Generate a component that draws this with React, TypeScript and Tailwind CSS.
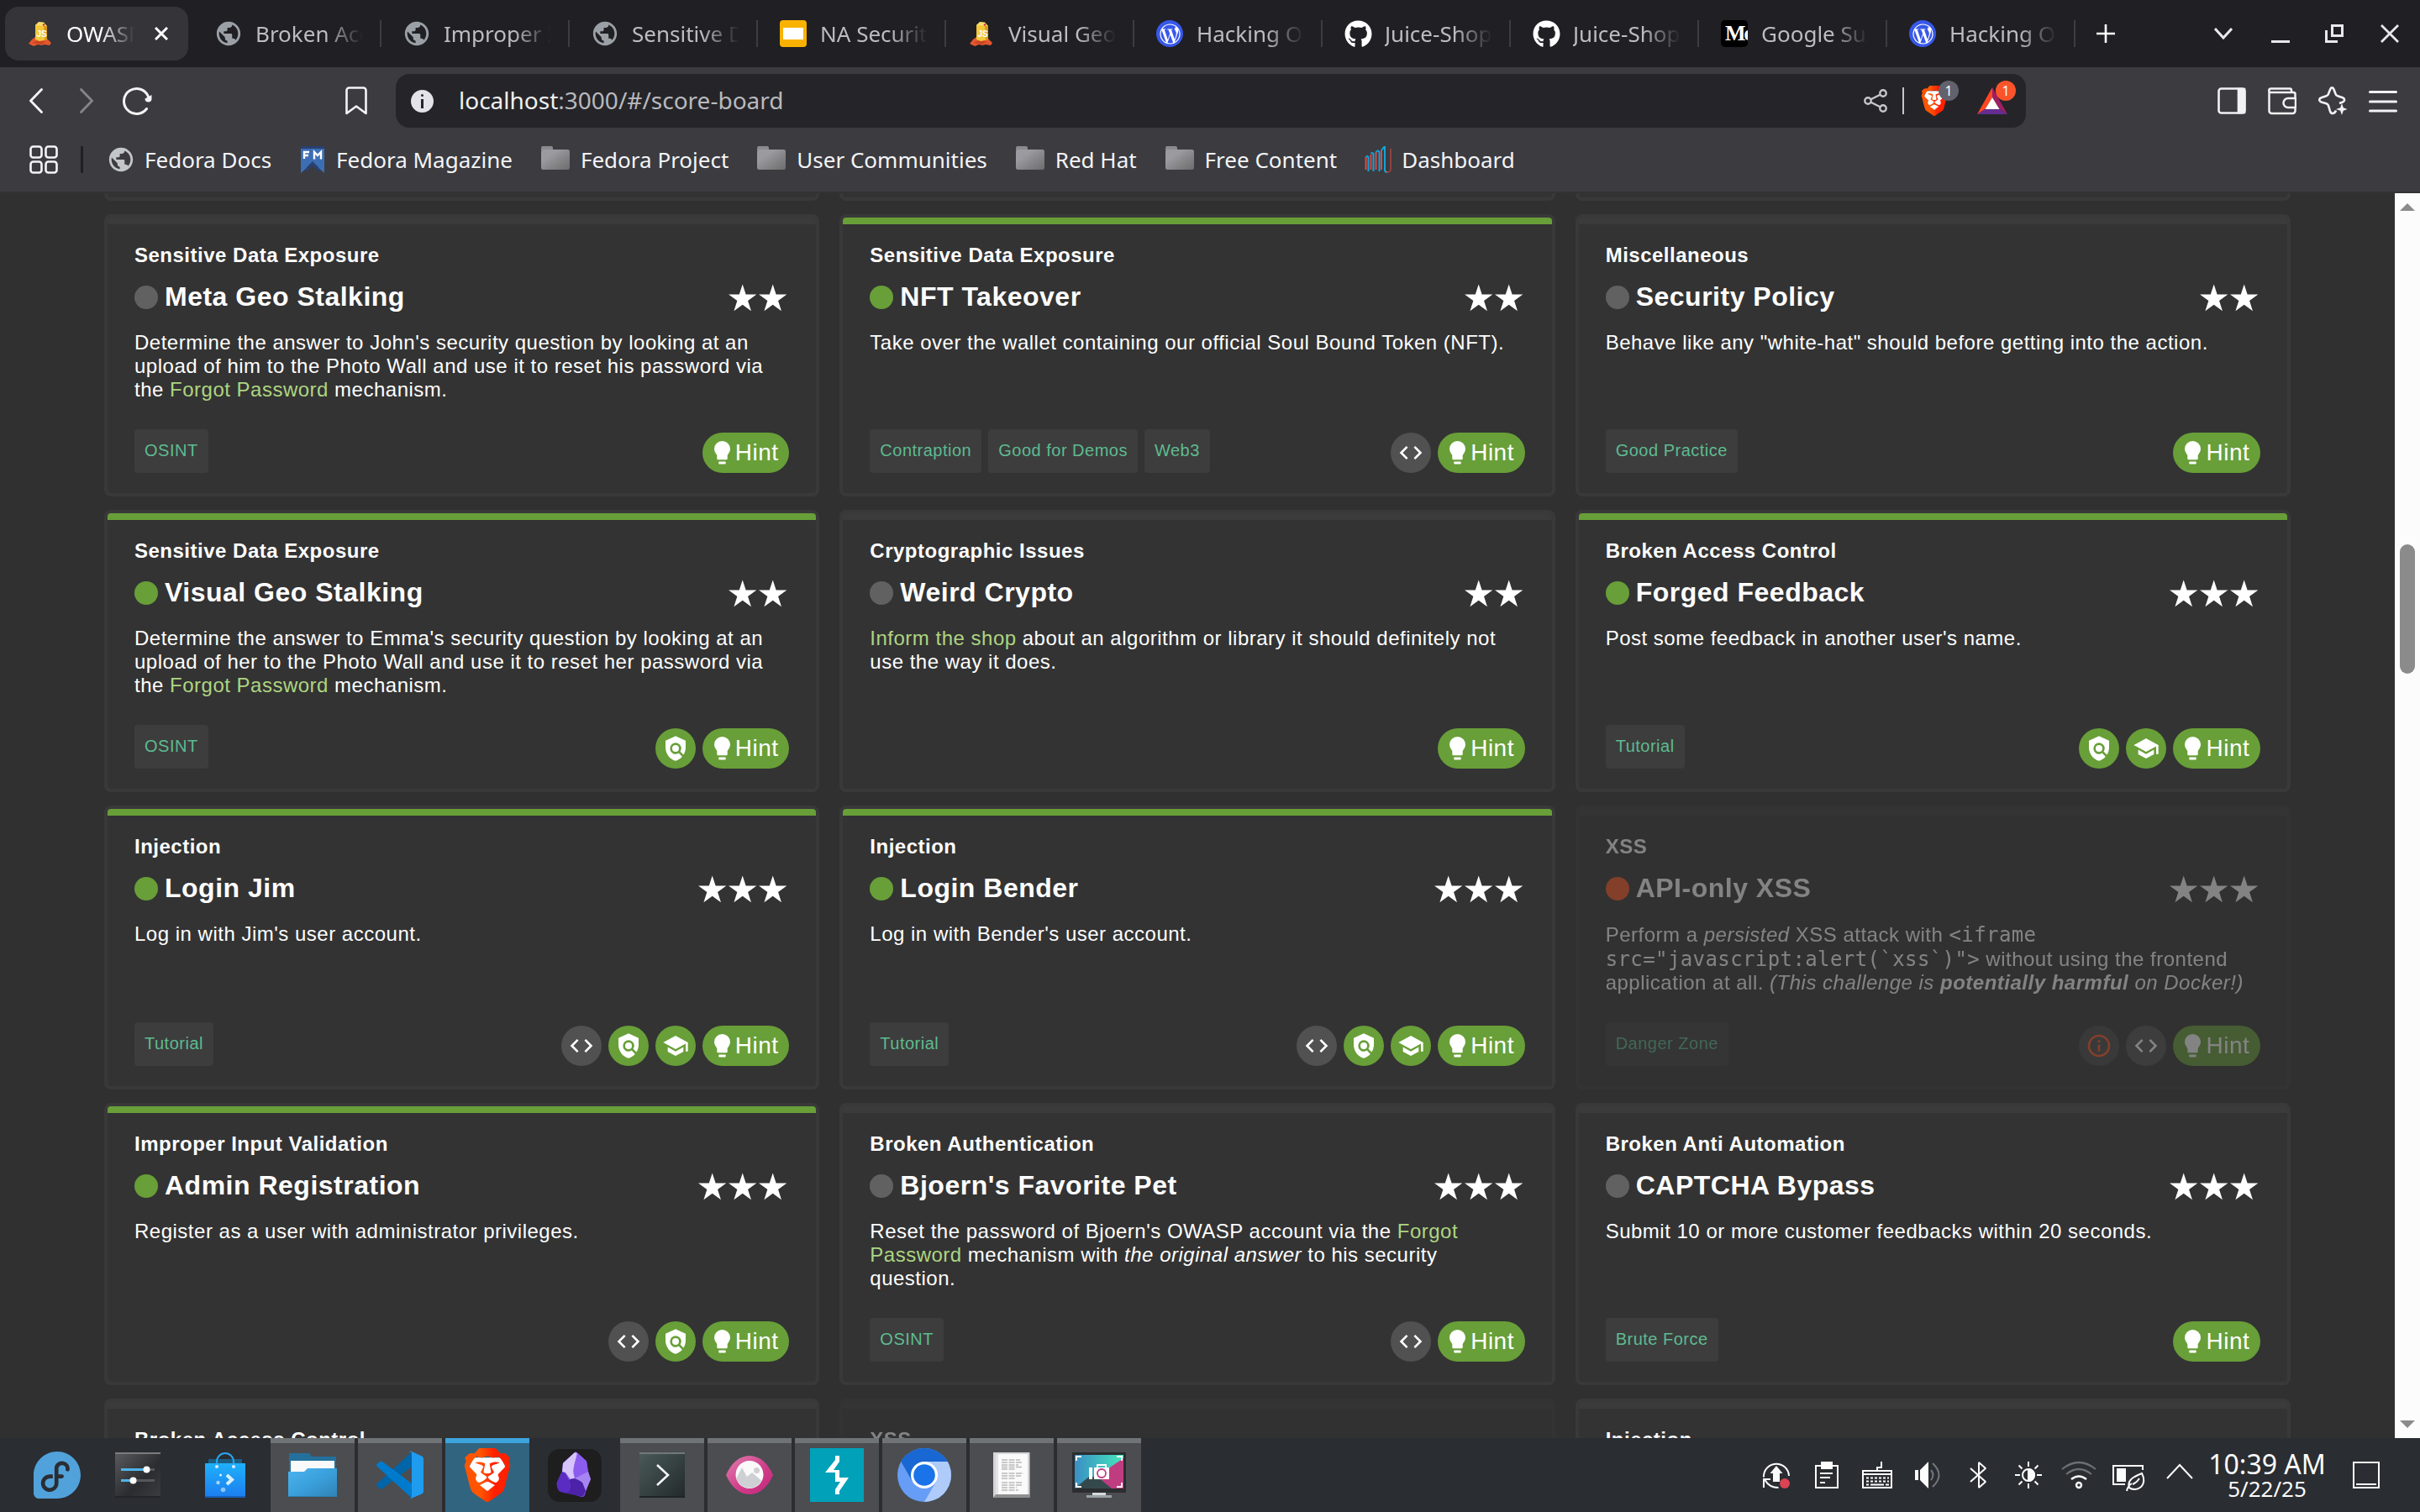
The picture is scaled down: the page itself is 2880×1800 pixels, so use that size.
import type { ReactNode } from 'react';
import { MdCode, MdInfoOutline, MdPolicy, MdPublic, MdSchool } from 'react-icons/md';
import { FaGithub, FaWordpressSimple } from 'react-icons/fa';
import { SiBrave, SiFedora } from 'react-icons/si';

/* ---------- favicons ---------- */

function JuiceIcon() {
  return (
    <svg viewBox="0 0 32 32" className="h-8 w-8">
      <path d="M2 28l4-5 4-3 14 2 3 3 2 2-2 3-6-1-4 1-4-1-5 2z" fill="#e4572e" />
      <path d="M6 27l8-3 8 2-5 3-5-1z" fill="#b83a1c" opacity=".6" />
      <path d="M10 6l4-3 7 1 3 3v16l-9 2-5-2z" fill="#f3c93b" />
      <path d="M20 6l4 1v16l-3 1z" fill="#d99a1b" />
      <path d="M14 2l6 .5 3.500 4.500L10 6z" fill="#f8dd6d" />
      <circle cx="20" cy="5.500" r="1.300" fill="#c33" />
      <text x="11.500" y="20" fontSize="10" fontWeight="700" fill="#fff" fontFamily="Liberation Sans, sans-serif">JS</text>
    </svg>
  );
}

function WordpressIcon() {
  return (
    <div className="grid h-8 w-8 place-items-center rounded-full bg-[#3858e9]">
      <FaWordpressSimple size={25} color="#fff" />
    </div>
  );
}

function MediumIcon() {
  return (
    <div className="h-8 w-8 overflow-hidden rounded-[5px] bg-black pl-[5px] font-['Liberation_Serif',serif] text-[26px] leading-8 font-bold tracking-[-2px] text-white">
      Me
    </div>
  );
}

function SlidesIcon() {
  return (
    <div className="grid h-8 w-8 place-items-center rounded-[4px] bg-[#f9b200]">
      <div className="h-3.5 w-6 bg-white" />
    </div>
  );
}

const Globe = ({ className }: { className: string }) => (
  <div className={`flex h-8 w-8 items-center justify-center ${className}`}>
    <MdPublic size={34} className="shrink-0" />
  </div>
);

/* ---------- tab strip ---------- */

const tabs: { title: string; icon: ReactNode }[] = [
  { title: 'Broken Access', icon: <Globe className="text-[#9aa0a6]" /> },
  { title: 'Improper Input', icon: <Globe className="text-[#9aa0a6]" /> },
  { title: 'Sensitive Data', icon: <Globe className="text-[#9aa0a6]" /> },
  { title: 'NA Security', icon: <SlidesIcon /> },
  { title: 'Visual Geo', icon: <JuiceIcon /> },
  { title: 'Hacking OWASP', icon: <WordpressIcon /> },
  { title: 'Juice-Shop', icon: <FaGithub size={33} color="#fff" /> },
  { title: 'Juice-Shop', icon: <FaGithub size={33} color="#fff" /> },
  { title: 'Google Summer', icon: <MediumIcon /> },
  { title: 'Hacking OWASP', icon: <WordpressIcon /> },
];

function TabStrip() {
  return (
    <div className="flex h-20 items-center bg-[#1f1f24] pl-1.5">
      <div className="flex h-16 w-[218px] items-center rounded-2xl bg-[#343439] pl-[26px]">
        <JuiceIcon />
        <div className="ml-[15px] w-[81px] overflow-hidden text-[26px] whitespace-nowrap text-white [mask-image:linear-gradient(to_right,#000_50%,transparent)]">
          OWASP
        </div>
        <svg viewBox="0 0 16 16" className="ml-6 h-4 w-4" stroke="#fff" strokeWidth="3">
          <path d="M1 1l14 14M15 1L1 15" />
        </svg>
      </div>
      <div className="ml-1.5 flex">
        {tabs.map((t, i) => (
          <div key={i} className="flex h-16 w-56 items-center pl-[26px]">
            <div className="w-8 shrink-0">{t.icon}</div>
            <div className="ml-4 w-32 overflow-hidden text-[26px] whitespace-nowrap text-[#bdbdc1] [mask-image:linear-gradient(to_right,#000_65%,transparent)]">
              {t.title}
            </div>
            <div className="ml-5 h-8 w-0.5 bg-[#3c3c42]" />
          </div>
        ))}
      </div>
      <svg viewBox="0 0 22 22" className="ml-[25px] h-[22px] w-[22px]" stroke="#fff" strokeWidth="2.6">
        <path d="M11 0v22M0 11h22" />
      </svg>
      <svg viewBox="0 0 22 14" className="ml-[118px] h-3.5 w-[22px]" fill="none" stroke="#e9e9ec" strokeWidth="3">
        <path d="M1 1l10 11L21 1" />
      </svg>
      <svg viewBox="0 0 22 22" className="ml-[46px] h-[22px] w-[22px]">
        <path d="M0 19h22v3H0z" fill="#e9e9ec" />
      </svg>
      <svg viewBox="0 0 22 22" className="ml-[42px] h-[22px] w-[22px]" fill="none" stroke="#e9e9ec" strokeWidth="3">
        <path d="M8.500 1.500h12v12h-12zM1.500 7v13.500H15" />
      </svg>
      <svg viewBox="0 0 22 22" className="ml-11 h-[22px] w-[22px]" stroke="#e9e9ec" strokeWidth="2.8">
        <path d="M1 1l20 20M21 1L1 21" />
      </svg>
    </div>
  );
}

/* ---------- address bar ---------- */

function BraveLion({ size, gradient }: { size: number; gradient: string }) {
  return (
    <svg viewBox="0 0 24 24" width={size} height={size} className="block">
      <defs>
        <linearGradient id={gradient} x1="0" x2="1">
          <stop offset=".35" stopColor="#ff5500" />
          <stop offset=".65" stopColor="#ff2000" />
        </linearGradient>
      </defs>
      <path d="M6 4.200h12l2 4-2.500 8L12 21l-5.500-4.800L4 8.200z" fill="#fff" />
      <SiBrave size={24} fill={`url(#${gradient})`} />
    </svg>
  );
}

function AddressRow() {
  return (
    <div className="flex h-20 items-center pl-[35px]">
      <svg viewBox="0 0 16 30" className="h-[30px] w-4" fill="none" stroke="#f4f4f6" strokeWidth="2.8" strokeLinecap="round">
        <path d="M14.500 1.500L1.500 15l13 13.500" />
      </svg>
      <svg viewBox="0 0 16 30" className="ml-[44px] h-[30px] w-4" fill="none" stroke="#85858a" strokeWidth="2.8" strokeLinecap="round">
        <path d="M1.500 1.500L14.500 15l-13 13.500" />
      </svg>
      <svg viewBox="0 0 36 34" className="ml-[35px] h-[34px] w-9" fill="none" stroke="#f4f4f6" strokeWidth="3" strokeLinecap="round">
        <path d="M28.500 26.500A15 15 0 1 1 30.500 12" />
        <path d="M26.500 14.500l8-4.500v4.500a4 4 0 0 1-4 4a4 4 0 0 1-4-4z" fill="#f4f4f6" stroke="none" />
      </svg>
      <svg viewBox="0 0 26 34" className="ml-[229px] h-[34px] w-[26px]" fill="none" stroke="#f4f4f6" strokeWidth="2.6" strokeLinejoin="round">
        <path d="M4.500 1.500h17a3 3 0 0 1 3 3V32L13 23.500 1.500 32V4.500a3 3 0 0 1 3-3z" />
      </svg>
      <div className="ml-[34px] flex h-16 w-[1940px] items-center rounded-2xl bg-[#252529] pr-[22px] pl-[18px]">
        <div className="flex h-[27px] w-[27px] flex-col items-center justify-center gap-[3px] rounded-full bg-[#e4e3e9]">
          <div className="h-[3px] w-[3px] rounded-full bg-[#252529]" />
          <div className="h-[11px] w-[3px] bg-[#252529]" />
        </div>
        <div className="ml-[30px] pb-0.5 text-[28px] text-[#b9b9bf]">
          <span className="text-[#f0f0f2]">localhost</span>:3000/#/score-board
        </div>
        <svg viewBox="0 0 28 28" className="ml-auto h-7 w-7" fill="none" stroke="#c6c6cc" strokeWidth="2.400">
          <circle cx="5" cy="14" r="3.700" />
          <circle cx="23" cy="5" r="3.700" />
          <circle cx="23" cy="23" r="3.700" />
          <path d="M8.500 12.300l11-5.600M8.500 15.700l11 5.600" />
        </svg>
        <div className="ml-[18px] h-8 w-0.5 bg-[#c6c6cc]" />
        <div className="relative ml-[18px] h-9 w-9">
          <BraveLion size={36} gradient="lion-small" />
          <div className="absolute -top-1.5 left-[23px] grid h-6 w-6 place-items-center rounded-full bg-[#62626e] text-[16px] leading-none text-white">1</div>
        </div>
        <div className="relative ml-[33px] h-9 w-9">
          <svg viewBox="0 0 36 36" className="h-9 w-9">
            <path d="M18 2L0 34l9.500-6L18 14z" fill="#ff4724" />
            <path d="M18 2l18 32-9.500-6L18 14z" fill="#9e1f63" />
            <path d="M0 34h36l-9.500-6h-17z" fill="#662d91" />
            <path d="M18 14l8.500 14h-17z" fill="#fff" />
          </svg>
          <div className="absolute -top-1.5 left-[22px] grid h-6 w-6 place-items-center rounded-full bg-[#fb542b] text-[16px] leading-none text-white">1</div>
        </div>
      </div>
      <div className="ml-[228px] flex gap-[26px] text-[#f2f2f4]">
        <svg viewBox="0 0 34 34" className="h-[34px] w-[34px]" fill="none" stroke="currentColor" strokeWidth="2.600">
          <rect x="1.500" y="2.500" width="31" height="29" rx="3" />
          <path d="M25 3h7v28h-7z" fill="currentColor" />
        </svg>
        <svg viewBox="0 0 34 34" className="h-[34px] w-[34px]" fill="none" stroke="currentColor" strokeWidth="2.500" strokeLinejoin="round">
          <path d="M32.500 14V9a2 2 0 0 0-2-2H3.500a2 2 0 0 1 0-4.500H26a2 2 0 0 1 2 2V7M1.500 4.500V29a3 3 0 0 0 3 3h25a3 3 0 0 0 3-3v-4" />
          <path d="M33 14h-9a5.500 5.500 0 0 0 0 11h9z" />
        </svg>
        <svg viewBox="0 0 34 34" className="h-[34px] w-[34px]" fill="none" stroke="currentColor" strokeWidth="2.600" strokeLinejoin="round">
          <path d="M21 28.500c-1.500 4-5.500 5-7 1l-2-6.800a4 4 0 0 0-2.500-2.500L3.500 18.500c-3-1.200-3-4 0-5.200l6-2a4 4 0 0 0 2.500-2.500L14.300 3c1-2.200 3-2.200 4 0l2.200 5.800a4 4 0 0 0 2.500 2.500l6 2c2.800 1.200 2.800 4 0 5.200l-4 1.500" />
          <path d="M28 20l1.800 5.200L35 27l-5.200 1.800L28 34l-1.800-5.200L21 27l5.200-1.800z" fill="currentColor" stroke="none" />
        </svg>
        <svg viewBox="0 0 34 34" className="h-[34px] w-[34px]" stroke="currentColor" strokeWidth="3" strokeLinecap="round">
          <path d="M1.500 6.500h31M1.500 18h31M1.500 29h31" />
        </svg>
      </div>
    </div>
  );
}

/* ---------- bookmarks ---------- */

const Folder = () => (
  <svg viewBox="0 0 36 32" className="h-8 w-9">
    <defs>
      <linearGradient id="folder" x1="0" y1="0" x2="1" y2="1">
        <stop offset=".3" stopColor="#9a9aa0" />
        <stop offset="1" stopColor="#6c6c6c" />
      </linearGradient>
    </defs>
    <path d="M2 0h11a2 2 0 0 1 2 2v3H1V2z" fill="#8b8b8e" />
    <rect x="1" y="4" width="34" height="24" rx="2.500" fill="url(#folder)" />
  </svg>
);

const FedoraMagazineIcon = () => (
  <svg viewBox="0 0 32 32" className="h-8 w-8">
    <path d="M2 0h28v32L16 20 2 32z" fill="#3c6eb4" />
    <path d="M2 0h28v3H2z" fill="#294172" />
    <path d="M7 32l9-9 9 9-2-7-7-7-7 7z" fill="#294172" />
    <path d="M6 15V7h6M6 11h5M18 15.500V7l4 4 4-4v8.500" fill="none" stroke="#fff" strokeWidth="2.400" />
  </svg>
);

const DashboardIcon = () => (
  <svg viewBox="0 0 32 32" className="h-8 w-8" fill="none" strokeWidth="2">
    <path d="M1.500 28V13M7.500 28V10M13.500 28V7M20 28V5" stroke="#e0483e" />
    <path d="M1.500 13q2-2 3 0v17M7.500 9q2-2 3 0v21M13.500 7q3-3 4 0v23M20 5l4-5v28q0 3 3 3" stroke="#12a5d8" />
    <path d="M25 30q5 2 6-1V3" stroke="#e0483e" strokeWidth="1" />
  </svg>
);

const bookmarks: { title: string; icon: ReactNode }[] = [
  { title: 'Fedora Docs', icon: <Globe className="text-[#c3c6c9]" /> },
  { title: 'Fedora Magazine', icon: <FedoraMagazineIcon /> },
  { title: 'Fedora Project', icon: <Folder /> },
  { title: 'User Communities', icon: <Folder /> },
  { title: 'Red Hat', icon: <Folder /> },
  { title: 'Free Content', icon: <Folder /> },
  { title: 'Dashboard', icon: <DashboardIcon /> },
];

function BookmarksRow() {
  return (
    <div className="flex h-[60px] items-center pl-[35px]">
      <svg viewBox="0 0 34 34" className="h-[34px] w-[34px]" fill="none" stroke="#f4f4f6" strokeWidth="2.600">
        <rect x="1.500" y="1.500" width="13" height="13" rx="3" />
        <rect x="19.500" y="1.500" width="13" height="13" rx="3" />
        <rect x="1.500" y="19.500" width="13" height="13" rx="3" />
        <rect x="19.500" y="19.500" width="13" height="13" rx="3" />
      </svg>
      <div className="ml-[27px] h-8 w-[3px] bg-[#1f1f24]" />
      <div className="ml-[29px] flex gap-[33px]">
        {bookmarks.map((b) => (
          <div key={b.title} className="flex items-center gap-3 text-[26px] leading-9 text-[#f4f4f6]">
            {b.icon}
            <span>{b.title}</span>
          </div>
        ))}
      </div>
    </div>
  );
}

/* ---------- score board cards ---------- */

type Badge = 'code' | 'policy' | 'school' | 'info';
type Challenge = {
  category: string;
  name: string;
  stars: number;
  solved?: boolean;
  disabled?: boolean;
  description: ReactNode;
  tags: string[];
  badges: Badge[];
};

const Link = ({ children }: { children: ReactNode }) => <span className="text-[#aed581]">{children}</span>;

const challenges: Challenge[] = [
  {
    category: 'Sensitive Data Exposure', name: 'Meta Geo Stalking', stars: 2, tags: ['OSINT'], badges: [],
    description: <>Determine the answer to John's security question by looking at an upload of him to the Photo Wall and use it to reset his password via the <Link>Forgot Password</Link> mechanism.</>,
  },
  {
    category: 'Sensitive Data Exposure', name: 'NFT Takeover', stars: 2, solved: true,
    tags: ['Contraption', 'Good for Demos', 'Web3'], badges: ['code'],
    description: 'Take over the wallet containing our official Soul Bound Token (NFT).',
  },
  {
    category: 'Miscellaneous', name: 'Security Policy', stars: 2, tags: ['Good Practice'], badges: [],
    description: 'Behave like any "white-hat" should before getting into the action.',
  },
  {
    category: 'Sensitive Data Exposure', name: 'Visual Geo Stalking', stars: 2, solved: true, tags: ['OSINT'], badges: ['policy'],
    description: <>Determine the answer to Emma's security question by looking at an upload of her to the Photo Wall and use it to reset her password via the <Link>Forgot Password</Link> mechanism.</>,
  },
  {
    category: 'Cryptographic Issues', name: 'Weird Crypto', stars: 2, tags: [], badges: [],
    description: <><Link>Inform the shop</Link> about an algorithm or library it should definitely not use the way it does.</>,
  },
  {
    category: 'Broken Access Control', name: 'Forged Feedback', stars: 3, solved: true, tags: ['Tutorial'], badges: ['policy', 'school'],
    description: "Post some feedback in another user's name.",
  },
  {
    category: 'Injection', name: 'Login Jim', stars: 3, solved: true, tags: ['Tutorial'], badges: ['code', 'policy', 'school'],
    description: "Log in with Jim's user account.",
  },
  {
    category: 'Injection', name: 'Login Bender', stars: 3, solved: true, tags: ['Tutorial'], badges: ['code', 'policy', 'school'],
    description: "Log in with Bender's user account.",
  },
  {
    category: 'XSS', name: 'API-only XSS', stars: 3, disabled: true, tags: ['Danger Zone'], badges: ['info', 'code'],
    description: (
      <>
        Perform a <em>persisted</em> XSS attack with{' '}
        <code className="font-['DejaVu_Sans_Mono',monospace] tracking-[0.4px]">&lt;iframe src="javascript:alert(`xss`)"&gt;</code>{' '}
        without using the frontend application at all. <em>(This challenge is <strong>potentially harmful</strong> on Docker!)</em>
      </>
    ),
  },
  {
    category: 'Improper Input Validation', name: 'Admin Registration', stars: 3, solved: true, tags: [], badges: ['code', 'policy'],
    description: 'Register as a user with administrator privileges.',
  },
  {
    category: 'Broken Authentication', name: "Bjoern's Favorite Pet", stars: 3, tags: ['OSINT'], badges: ['code'],
    description: <>Reset the password of Bjoern's OWASP account via the <Link>Forgot Password</Link> mechanism with <em>the original answer</em> to his security question.</>,
  },
  {
    category: 'Broken Anti Automation', name: 'CAPTCHA Bypass', stars: 3, tags: ['Brute Force'], badges: [],
    description: 'Submit 10 or more customer feedbacks within 20 seconds.',
  },
  { category: 'Broken Access Control', name: '', stars: 0, tags: [], badges: [], description: '' },
  { category: 'XSS', name: '', stars: 0, disabled: true, tags: [], badges: [], description: '' },
  { category: 'Injection', name: '', stars: 0, tags: [], badges: [], description: '' },
];

const badgeIcons: Record<Badge, ReactNode> = {
  code: <MdCode size={32} />,
  policy: <MdPolicy size={32} />,
  school: <MdSchool size={32} />,
  info: <MdInfoOutline size={32} color="#ff5722" />,
};

const badgeColors: Record<Badge, string> = {
  code: 'bg-[#515151]',
  policy: 'bg-[#689f38]',
  school: 'bg-[#689f38]',
  info: 'bg-[#474747]',
};

const Star = () => (
  <svg viewBox="0 0 36 36" className="h-9 w-9" fill="currentColor">
    <path d="M16.700.5l3.930 12.090h12.710l-10.280 7.480 3.930 12.090-10.290-7.470-10.290 7.470 3.930-12.090L.060 12.590h12.710z" />
  </svg>
);

function HintButton() {
  return (
    <div className="flex h-12 w-[103.500px] items-center rounded-full bg-[#689f38] pl-3.5">
      <svg viewBox="0 0 19 28" className="h-7 w-[19px]" fill="#fff">
        <path d="M9.500 0a9.500 9.500 0 0 1 9.500 9.500c0 3.500-2.200 5.500-3.300 7.500v4a1.300 1.300 0 0 1-1.300 1.300H4.600A1.300 1.300 0 0 1 3.300 21v-4C2.200 15 0 13 0 9.500A9.500 9.500 0 0 1 9.500 0z" />
        <rect x="5.300" y="24.500" width="8.400" height="3" rx=".8" />
      </svg>
      <span className="ml-1.5 text-[28px] leading-8">Hint</span>
    </div>
  );
}

function Card({ c }: { c: Challenge }) {
  const dot = c.disabled ? 'bg-[#ff5722]' : c.solved ? 'bg-[#689f38]' : 'bg-[#616161]';
  return (
    <div className={`flex flex-col rounded-lg border-4 border-[#393939] bg-[#333333] ${c.disabled ? 'opacity-40' : ''}`}>
      <div className={`h-2 shrink-0 rounded-t ${c.solved ? 'bg-[#689f38]' : 'bg-[#3b3b3b]'}`} />
      <div className="flex grow flex-col px-8 pt-[23px] pb-6">
        <div className="text-2xl leading-7 font-bold">{c.category}</div>
        <div className="mt-[17px] flex h-[37px] items-center">
          <div className={`h-7 w-7 rounded-full ${dot}`} />
          <div className="ml-2 text-[32px] leading-[37px] font-bold">{c.name}</div>
          <div className="mt-1 ml-auto flex">
            {Array.from({ length: c.stars }, (_, i) => (
              <Star key={i} />
            ))}
          </div>
        </div>
        <div className={`mt-[22px] text-2xl ${c.disabled ? 'pt-px leading-[28.500px]' : 'leading-7'}`}>{c.description}</div>
        <div className="mt-auto flex h-[52px] items-end gap-2">
          {c.tags.map((t) => (
            <div key={t} className="flex h-[52px] items-center rounded bg-[#3d3d3d] px-3 pb-0.5 text-xl leading-[23px] text-[#5dbb91]">
              {t}
            </div>
          ))}
          <div className="ml-auto flex gap-2">
            {c.badges.map((b) => (
              <div key={b} className={`grid h-12 w-12 place-items-center rounded-full ${badgeColors[b]}`}>
                {badgeIcons[b]}
              </div>
            ))}
            <HintButton />
          </div>
        </div>
      </div>
    </div>
  );
}

function ScoreBoard() {
  return (
    <div className="flex h-[1482px] overflow-hidden bg-[#303030]">
      <div className="grid w-[2850px] shrink-0 grid-cols-3 grid-rows-[9px_336px_336px_338px_336px_336px] gap-x-6 gap-y-4 px-[124px] font-['Liberation_Sans',sans-serif] tracking-[0.5px] text-white">
        {[0, 1, 2].map((i) => (
          <div key={i} className="rounded-b-lg border-4 border-t-0 border-[#393939] bg-[#333333]" />
        ))}
        {challenges.map((c, i) => (
          <Card key={i} c={c} />
        ))}
      </div>
      <div className="flex w-[30px] flex-col items-center bg-[#fcfcfc]">
        <svg viewBox="0 0 18 9" className="mt-3 h-[9px] w-[18px]" fill="#8b8b8b">
          <path d="M9 0l9 9H0z" />
        </svg>
        <div className="mt-[397px] h-[154px] w-[18px] rounded-full bg-[#8b8b8b]" />
        <svg viewBox="0 0 18 9" className="mt-auto mb-3 h-[9px] w-[18px]" fill="#8b8b8b">
          <path d="M9 9l9-9H0z" />
        </svg>
      </div>
    </div>
  );
}

/* ---------- task bar ---------- */

const SettingsApp = () => (
  <svg viewBox="0 0 64 64" className="h-16 w-16">
    <defs>
      <linearGradient id="settings" x1="0" y1="0" x2="1" y2="1">
        <stop offset="0" stopColor="#5a5b5f" />
        <stop offset=".6" stopColor="#2b2c2f" />
        <stop offset="1" stopColor="#3b3d40" />
      </linearGradient>
    </defs>
    <rect x="5" y="5" width="54" height="54" rx="1" fill="url(#settings)" />
    <path d="M5 5h54v2H5z" fill="#7b7c7f" />
    <path d="M5 57h54v2H5z" fill="#222427" />
    <path d="M12 24h40v3H12zM12 37h40v3H12z" fill="#55575b" />
    <path d="M12 24h30v3H12zM12 37h14v3H12z" fill="#4fb3ea" />
    <circle cx="42.500" cy="25.500" r="4" fill="#fff" />
    <circle cx="26.500" cy="38.500" r="4" fill="#fff" />
  </svg>
);

const DiscoverApp = () => (
  <svg viewBox="0 0 64 64" className="h-16 w-16">
    <defs>
      <linearGradient id="bag" x1="0" y1="0" x2="0" y2="1">
        <stop offset="0" stopColor="#1fb0fb" />
        <stop offset="1" stopColor="#1c7df0" />
      </linearGradient>
    </defs>
    <path d="M12 13h40v6H12z" fill="#1b5e84" />
    <rect x="8" y="18" width="48" height="41" fill="url(#bag)" />
    <path d="M8 57h48v2H8z" fill="#1860b8" />
    <path d="M22 22V16a10 10 0 0 1 20 0v6" fill="none" stroke="#2aa5ee" strokeWidth="2" />
    <circle cx="22" cy="22" r="2" fill="#d9efff" />
    <circle cx="42" cy="22" r="2" fill="#d9efff" />
    <path d="M34 32l6 5.500-6 5.500" fill="none" stroke="#d9efff" strokeWidth="4" />
    <circle cx="26.500" cy="32" r="1.500" fill="#d9efff" />
    <circle cx="23.500" cy="41" r="2.200" fill="#a9d6fb" />
    <circle cx="29.500" cy="49.500" r="2.800" fill="#8cc4f8" />
  </svg>
);

const FilesApp = () => (
  <svg viewBox="0 0 64 64" className="h-16 w-16">
    <defs>
      <linearGradient id="files" x1="0" y1="0" x2="1" y2="1">
        <stop offset="0" stopColor="#4cb4f0" />
        <stop offset=".5" stopColor="#3aa0dc" />
        <stop offset="1" stopColor="#3182b4" />
      </linearGradient>
    </defs>
    <path d="M4 6h24l3 4h29v20H4z" fill="#24709c" />
    <path d="M6 15h52v20H6z" fill="#fafafa" />
    <path d="M3 28h19l4-4h35v34H3z" fill="url(#files)" />
    <path d="M3 57h58v1H3z" fill="#2a7fb0" />
  </svg>
);

const CodeApp = () => (
  <svg viewBox="0 0 64 64" className="h-16 w-16">
    <path d="M4.500 42.500a2.500 2.500 0 0 0 0 2.500l3.500 3.200a2.500 2.500 0 0 0 3 0L46 22V4.500z" fill="#0065a9" />
    <path d="M4.500 21.500a2.500 2.500 0 0 1 0-2.500L8 16a2.500 2.500 0 0 1 3 0l35 26v17.500z" fill="#007acc" />
    <path d="M46 59.500a3.500 3.500 0 0 1-4 .3c1.500 1 4-.3 4-2.300V6.500c0-2-2.500-3.200-4-2l2-.5c.8-.3 1.500-.2 2 0l12 5.500a3.500 3.500 0 0 1 2 3.200v38.600a3.500 3.500 0 0 1-2 3.200z" fill="#1f9cf0" />
  </svg>
);

const ObsidianApp = () => (
  <svg viewBox="0 0 64 64" className="h-16 w-16">
    <rect x="0" y="1" width="64" height="63" rx="14" fill="#1e1e1e" />
    <path d="M32 5c1-.8 2-.3 3 .5l11 10 2 13 3 8-4 10-3 9c-1 3-3 3-6 2l-8-3-14-3c-4-1-6-8-5-11l6-13 1-10z" fill="#8350e8" />
    <path d="M32 5L18 18l-1 10 4 1 7 10 4-4c-4-10 2-18 3-29z" fill="#d6c4fa" />
    <path d="M35 5.500c-2 11-7 19-3 29l8 2 8-8-2-13z" fill="#8c5cf0" />
    <path d="M17 28l-6 13c-1 4 1 10 4 11l8 2c4-5 5-10 2-16l-4-8z" fill="#5a2cc2" />
    <path d="M48 28l3 9-6 14-4-10-9-5z" fill="#a685f2" />
    <path d="M25 38c4-3 10-2 16 3l4 10-2 4c-1 3-3 3-6 2l-14-3c4-5 5-10 2-16z" fill="#4c22a8" />
  </svg>
);

const TerminalApp = () => (
  <svg viewBox="0 0 64 64" className="h-16 w-16">
    <defs>
      <linearGradient id="terminal" x1="0" y1="0" x2="1" y2="1">
        <stop offset="0" stopColor="#4b5a5a" />
        <stop offset="1" stopColor="#22292b" />
      </linearGradient>
    </defs>
    <rect x="5" y="5" width="54" height="54" rx="1" fill="url(#terminal)" />
    <path d="M5 5h54v2H5z" fill="#70787b" />
    <path d="M5 57h54v2H5z" fill="#1f2426" />
    <path d="M26 20l13 12-13 12" fill="none" stroke="#f4f4f4" strokeWidth="2.600" />
  </svg>
);

const GwenviewApp = () => (
  <svg viewBox="0 0 64 64" className="h-16 w-16">
    <defs>
      <linearGradient id="eye" x1="0" y1="0" x2="1" y2="1">
        <stop offset="0" stopColor="#e07db0" />
        <stop offset=".6" stopColor="#cf3a87" />
        <stop offset="1" stopColor="#c2287c" />
      </linearGradient>
      <clipPath id="eye-clip"><circle cx="32" cy="31.500" r="16" /></clipPath>
    </defs>
    <path d="M4 32C10 18 20 9 32 9s22 9 28 23c-6 14-16 23-28 23S10 46 4 32z" fill="url(#eye)" />
    <circle cx="32" cy="31.500" r="16.500" fill="#fafafa" />
    <g clipPath="url(#eye-clip)" fill="#cfd0d4">
      <path d="M14 40l9-17 6 11 6-5 14 12v10H14z" />
      <circle cx="40.500" cy="26.500" r="3.500" />
    </g>
  </svg>
);

const BurpApp = () => (
  <svg viewBox="0 0 64 64" className="h-16 w-16">
    <path d="M0 0h64v64H0z" fill="#00a1b9" />
    <path d="M30 9h5v7l-7 10h7v9h11L35 51v4h-5v-6l6-9h-6V29H18l12-15z" fill="#fff" />
  </svg>
);

const ChromiumApp = () => (
  <svg viewBox="0 0 64 64" className="h-16 w-16">
    <defs>
      <clipPath id="disc"><circle cx="32" cy="32" r="32" /></clipPath>
    </defs>
    <g clipPath="url(#disc)">
      <path d="M0 0h64v64H0z" fill="#669df6" />
      <path d="M64 16H32L18 40 4.300 16V0H64z" fill="#1967d2" />
      <path d="M32 16h32v48H32l14-24z" fill="#aecbfa" />
    </g>
    <circle cx="32" cy="32" r="16" fill="#fff" />
    <circle cx="32" cy="32" r="12.800" fill="#1a73e8" />
  </svg>
);

const DocumentApp = () => (
  <svg viewBox="0 0 64 64" className="h-16 w-16">
    <rect x="10" y="5" width="44" height="54" rx="1" fill="#8f8f8f" />
    <path d="M10 5h43v50H13l-3 4z" fill="#d5d5d5" />
    <path d="M13 7h38v48H13z" fill="#fafafa" />
    <path d="M13 7h3v48h-3z" fill="#e2e2e2" />
    <path d="M20 14h22M20 17h25M20 20h20M20 22.500h24M20 25h16M20 30h26M20 33h23M20 36h16M20 41h24M20 44h25M20 47h18M20 50h20" stroke="#b9b9b9" strokeWidth="1.500" strokeDasharray="7 1.500" />
  </svg>
);

const SpectacleApp = () => (
  <svg viewBox="0 0 64 64" className="h-16 w-16">
    <defs>
      <linearGradient id="screen" x1="0" x2="1">
        <stop offset="0" stopColor="#3a8fc4" />
        <stop offset="1" stopColor="#45e6bb" />
      </linearGradient>
    </defs>
    <path d="M0 5h64v48H0z" fill="#2b2d30" />
    <path d="M3 8h58v40H3z" fill="url(#screen)" />
    <path d="M61 12v36H45L30 33z" fill="#c03c80" />
    <path d="M3 48l17-14 10 0 17 14z" fill="#35494c" />
    <path d="M5 15V10h6M53 10h6v5M5 41v5h6M53 46h6v-5" fill="none" stroke="#fff" strokeWidth="1.800" />
    <path d="M20 23h4v14h-4zM26 23h18v14H26z" fill="#fff" />
    <path d="M30 23v-3h10v3" fill="none" stroke="#fff" strokeWidth="2" />
    <circle cx="35" cy="30" r="5" fill="none" stroke="#c03c80" strokeWidth="1.800" />
    <path d="M24 53h16v3H24z" fill="#d7dadd" />
    <path d="M17 56h30v3H17z" fill="#9aa1a6" />
  </svg>
);

const apps: { icon: ReactNode; state: 'idle' | 'open' | 'active' }[] = [
  { icon: <SettingsApp />, state: 'idle' },
  { icon: <DiscoverApp />, state: 'idle' },
  { icon: <FilesApp />, state: 'open' },
  { icon: <CodeApp />, state: 'open' },
  { icon: <BraveLion size={64} gradient="lion-large" />, state: 'active' },
  { icon: <ObsidianApp />, state: 'idle' },
  { icon: <TerminalApp />, state: 'open' },
  { icon: <GwenviewApp />, state: 'open' },
  { icon: <BurpApp />, state: 'open' },
  { icon: <ChromiumApp />, state: 'open' },
  { icon: <DocumentApp />, state: 'open' },
  { icon: <SpectacleApp />, state: 'open' },
];

const appStates = {
  idle: 'border-transparent',
  open: 'border-[#6f7376] bg-[#4b4d51]',
  active: 'border-[#3ea4dc] bg-[#31647f]',
};

const trayIcons: ReactNode[] = [
  <>
    <path d="M5 22.500A15 15 0 1 1 35 21" />
    <path d="M5 35V25h8M6.500 26q5 9 16 9" />
    <path d="M20 9l7.500 9H24v10h-8V18h-3.500z" fill="#fcfcfc" stroke="none" />
    <circle cx="30" cy="30" r="6" fill="#da4453" stroke="none" />
  </>,
  <>
    <path d="M7 9h26v26H7z" />
    <path d="M13 4h14v9H13z" fill="#fcfcfc" stroke="none" />
    <path d="M12 18h15M12 23h12M12 29h6" />
  </>,
  <>
    <path d="M3 15h34v20H3zM3 19h34" />
    <path d="M7 23.500h27M7 27.500h27" strokeDasharray="3 2" />
    <path d="M7 31.500h3M12 31.500h16M30 31.500h4M20 14v-3h5V4" />
  </>,
  <>
    <path d="M5 14h4v12H5zM11 14L21 4v32L11 26z" fill="#fcfcfc" stroke="none" />
    <path d="M24 14q5 6 0 12M26 6q15 14 0 28" stroke="#73777a" />
  </>,
  <path d="M11 12l18 16-8 7V5l8 7-18 16" strokeLinejoin="bevel" />,
  <>
    <circle cx="20" cy="20" r="7" />
    <path d="M20 13a7 7 0 0 1 0 14z" fill="#fcfcfc" />
    <path d="M20 4v6M20 30v6M4 20h6M30 20h6M8.500 8.500l4 4M27.500 27.500l4 4M8.500 31.500l4-4M27.500 12.500l4-4" />
  </>,
  <>
    <path d="M0 13Q20-3 40 13M5 19q15-12 30 0" stroke="#6b7074" strokeWidth="2.200" />
    <path d="M11 25q9-7 18 0" strokeWidth="2.600" />
    <circle cx="20" cy="32" r="3" strokeWidth="2.400" />
  </>,
  <>
    <path d="M36 14V9H1v22h14" />
    <path d="M5 12h11v16H5z" fill="#fcfcfc" stroke="none" />
    <path d="M17 39q1-6 6-9M20 35c-3-9 5-13 15-17 5 10 1 18-8 19-4 0-6-1-7-2zM24 31q5-2 8-7" />
  </>,
  <path d="M5 24l15-16 15 16" />,
];

function TaskBar() {
  return (
    <div className="flex h-[88px] bg-[#2a2d32]">
      <div className="flex w-[114px] items-center pl-10">
        <SiFedora size={56} color="#51a2da" />
      </div>
      <div className="flex gap-1">
        {apps.map((a, i) => (
          <div key={i} className={`flex h-[88px] w-[100px] justify-center border-t-[6px] pt-1.5 ${appStates[a.state]}`}>
            {a.icon}
          </div>
        ))}
      </div>
      <div className="ml-auto flex">
        {trayIcons.map((icon, i) => (
          <div key={i} className="flex w-[60px] items-center justify-center">
            <svg viewBox="0 0 40 40" className="h-10 w-10 overflow-visible" fill="none" stroke="#fcfcfc" strokeWidth="2">
              {icon}
            </svg>
          </div>
        ))}
        <div className="w-[148px] pt-[15px] text-center text-[#fcfcfc]">
          <div className="text-[32px] leading-8">10:39 AM</div>
          <div className="text-[26px] leading-[26px]">5/22/25</div>
        </div>
        <div className="flex w-[108px] items-center pl-7">
          <div className="flex h-8 w-8 items-end border-2 border-[#fcfcfc] p-0.5">
            <div className="h-0.5 w-full bg-[#fcfcfc]" />
          </div>
        </div>
      </div>
    </div>
  );
}

export default function App() {
  return (
    <div className="flex h-[1800px] w-[2880px] flex-col overflow-hidden bg-[#303030] font-['Noto_Sans',sans-serif]">
      <TabStrip />
      <div className="h-[150px] border-b-2 border-[#323236] bg-[#3b3b40]">
        <AddressRow />
        <BookmarksRow />
      </div>
      <ScoreBoard />
      <TaskBar />
    </div>
  );
}
